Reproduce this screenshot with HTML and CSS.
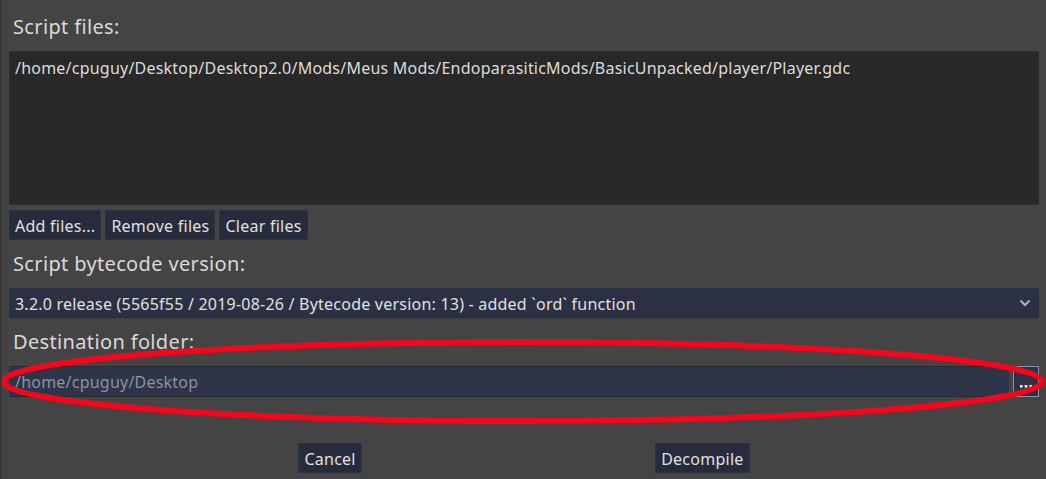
FILE: index.html
```html
<!DOCTYPE html>
<html>
<head>
<meta charset="utf-8">
<link rel="stylesheet" href="styles.css">
</head>
<body>
<div class="dialog">
  <div class="label">Script files:</div>
  <div class="file-list">
    <div class="file-item">/home/cpuguy/Desktop/Desktop2.0/Mods/Meus Mods/EndoparasiticMods/BasicUnpacked/player/Player.gdc</div>
  </div>
  <div class="btn-row">
    <button class="btn">Add files...</button>
    <button class="btn">Remove files</button>
    <button class="btn">Clear files</button>
  </div>
  <div class="label">Script bytecode version:</div>
  <div class="select">
    <span class="select-text">3.2.0 release (5565f55 / 2019-08-26 / Bytecode version: 13) - added `ord` function</span>
    <svg class="chevron" width="12" height="8" viewBox="0 0 12 8"><polyline points="1.5,1.5 6,6 10.5,1.5" fill="none" stroke="#aeb4c2" stroke-width="2"/></svg>
  </div>
  <div class="label">Destination folder:</div>
  <div class="dest-row">
    <div class="input">/home/cpuguy/Desktop</div>
    <button class="browse" aria-label="...">
      <svg width="12" height="3" viewBox="0 0 12 3"><rect x="0" y="0" width="2.6" height="2.6" fill="#f0f0f0"/><rect x="4.7" y="0" width="2.6" height="2.6" fill="#f0f0f0"/><rect x="9.4" y="0" width="2.6" height="2.6" fill="#f0f0f0"/></svg>
    </button>
  </div>
  <div class="footer">
    <div class="spacer"></div>
    <button class="btn">Cancel</button>
    <div class="spacer"></div>
    <button class="btn">Decompile</button>
    <div class="spacer"></div>
  </div>
</div>
<svg class="annotation" width="1046" height="479" viewBox="0 0 1046 479">
  <ellipse cx="522.5" cy="381.5" rx="519.5" ry="39.5" fill="none" stroke="#f2071c" stroke-width="6"/>
</svg>
</body>
</html>
```
FILE: styles.css
```css
html, body {
  margin: 0;
  padding: 0;
}
body {
  width: 1046px;
  height: 479px;
  background: #444444;
  font-family: "Noto Sans", "Open Sans", sans-serif;
  color: #e0e0e0;
  overflow: hidden;
  position: relative;
  border-left: 2px solid #383838;
  box-sizing: border-box;
}
.dialog {
  display: flex;
  flex-direction: column;
  padding: 3px 7px 0 7px;
}
.label {
  font-size: 20px;
  line-height: 26px;
  letter-spacing: 0.35px;
  padding: 11px 0 11px 4px;
  color: #d9d9d9;
}
.file-list {
  height: 154px;
  box-sizing: border-box;
  background: #282828;
  border: 1px solid #2e2e2e;
  border-radius: 2px;
  padding: 6px 5px;
  font-size: 16px;
  line-height: 20px;
  letter-spacing: 0.22px;
  color: #dcdcdc;
}
.btn-row {
  display: flex;
  gap: 4px;
  margin-top: 5px;
}
.btn {
  height: 30px;
  box-sizing: border-box;
  font-family: inherit;
  font-size: 16px;
  line-height: 28px;
  letter-spacing: 0.25px;
  padding: 2px 6px 0 6px;
  margin: 0;
  background: #272c3c;
  color: #e0e0e0;
  border: none;
  border-radius: 2px;
  box-shadow: inset 0 0 0 1px #2e3343;
}
.select {
  height: 30px;
  box-sizing: border-box;
  display: flex;
  align-items: center;
  background: #2b3142;
  border-bottom: 1px solid #252a36;
  border-radius: 2px;
  padding: 3px 8px 0 6px;
  font-size: 16px;
  letter-spacing: 0.22px;
}
.select-text {
  flex: 1;
  white-space: nowrap;
}
.chevron {
  display: block;
  margin-top: -3px;
}
.dest-row {
  display: flex;
  gap: 4px;
}
.input {
  flex: 1;
  height: 31px;
  box-sizing: border-box;
  background: #2e3548;
  border-top: 1px solid #242833;
  border-bottom: 1px solid #242833;
  padding: 1px 6px 0 6px;
  font-size: 16px;
  line-height: 28px;
  letter-spacing: 0.22px;
  color: #8c929f;
}
.browse {
  width: 26px;
  height: 31px;
  box-sizing: border-box;
  margin: 0;
  padding: 10px 0 0 0;
  display: flex;
  align-items: center;
  justify-content: center;
  background: #2d3345;
  border: 1px solid #8593ac;
}
.browse svg {
  display: block;
}
.footer {
  display: flex;
  gap: 4px;
  margin-top: 46px;
}
.spacer {
  flex: 1;
}
.annotation {
  position: absolute;
  left: -2px;
  top: 0;
  pointer-events: none;
}
```
